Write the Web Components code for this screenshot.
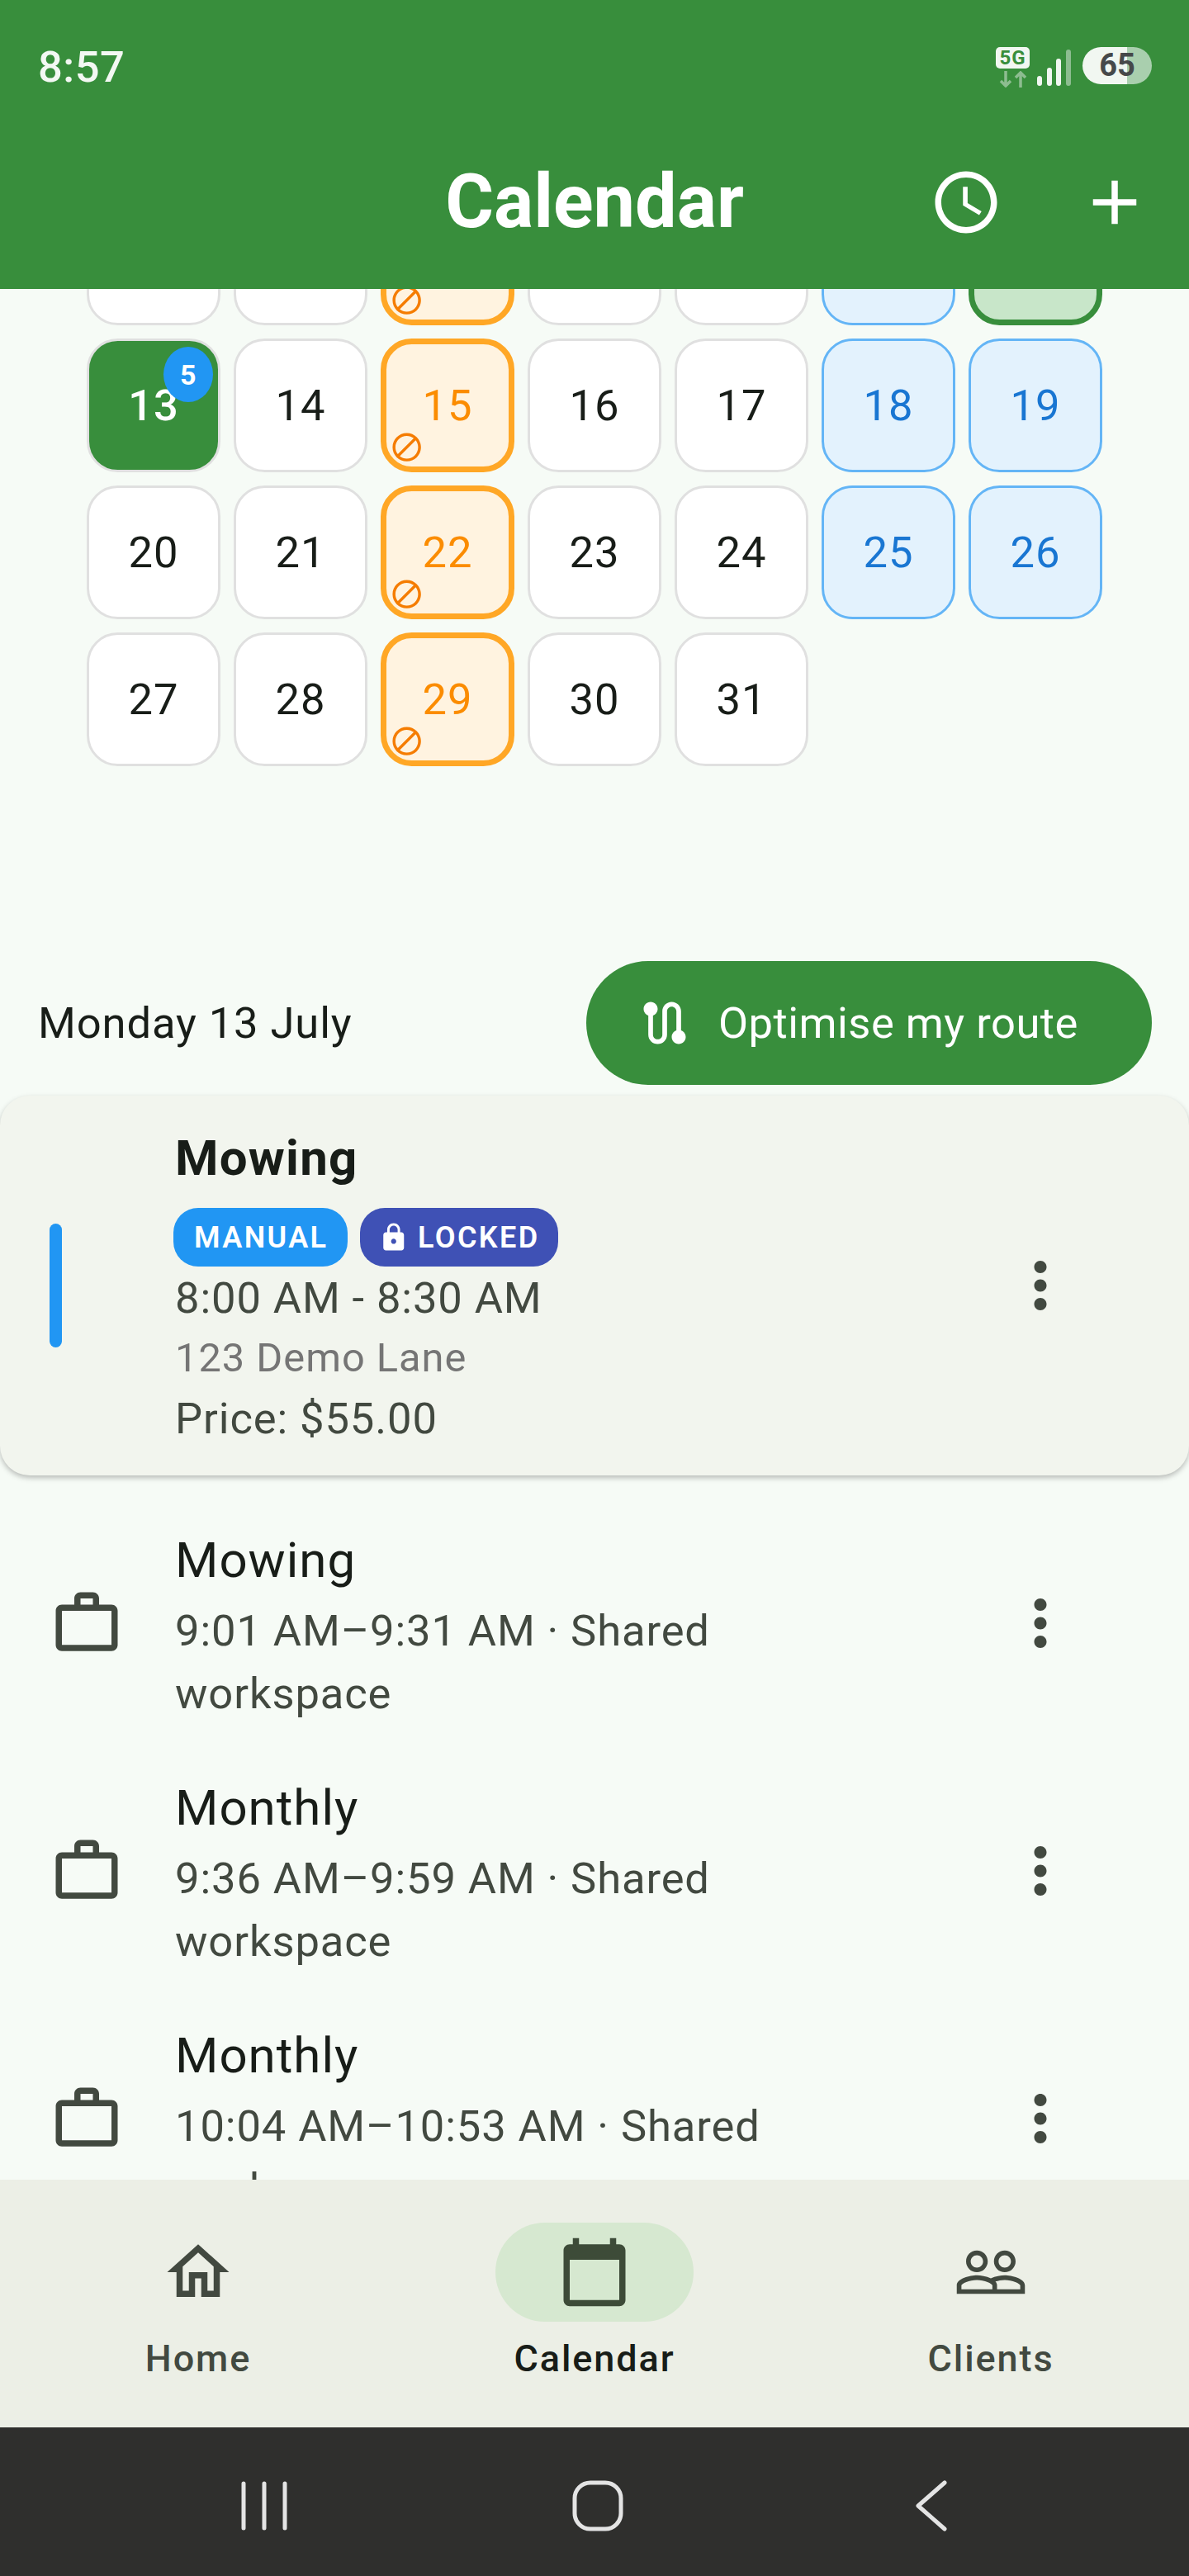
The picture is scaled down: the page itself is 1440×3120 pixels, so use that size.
<!DOCTYPE html>
<html>
<head>
<meta charset="utf-8">
<title>Calendar</title>
<style>
    html, body { margin: 0; padding: 0; background: #f6fbf6; }
    body { font-family: Roboto, "Noto Sans", sans-serif; color: #181d18; }
</style>
</head>
<body>
<app-shell></app-shell>

<script>
// material icon paths, all on a 24 unit box
const ICONS = {
    clock: "M11.99 2C6.47 2 2 6.48 2 12s4.47 10 9.99 10C17.52 22 22 17.52 22 12S17.52 2 11.99 2zM12 20c-4.42 0-8-3.58-8-8s3.58-8 8-8 8 3.58 8 8-3.58 8-8 8zm.5-13H11v6l5.25 3.15.75-1.23-4.5-2.67z",
    add: "M19 13h-6v6h-2v-6H5v-2h6V5h2v6h6v2z",
    block: "M12 2C6.48 2 2 6.48 2 12s4.48 10 10 10 10-4.48 10-10S17.52 2 12 2zM4 12c0-4.42 3.58-8 8-8 1.85 0 3.55.63 4.9 1.69L5.69 16.9C4.63 15.55 4 13.85 4 12zm8 8c-1.85 0-3.55-.63-4.9-1.69L18.31 7.1C19.37 8.45 20 10.15 20 12c0 4.42-3.58 8-8 8z",
    route: "M19 15.18V7c0-2.21-1.79-4-4-4s-4 1.79-4 4v10c0 1.1-.9 2-2 2s-2-.9-2-2V8.82C8.16 8.4 9 7.3 9 6c0-1.66-1.34-3-3-3S3 4.34 3 6c0 1.3.84 2.4 2 2.82V17c0 2.21 1.79 4 4 4s4-1.79 4-4V7c0-1.1.9-2 2-2s2 .9 2 2v8.18c-1.16.41-2 1.51-2 2.82 0 1.66 1.34 3 3 3s3-1.34 3-3c0-1.3-.84-2.4-2-2.82z",
    lock: "M18 8h-1V6c0-2.76-2.24-5-5-5S7 3.24 7 6v2H6c-1.1 0-2 .9-2 2v10c0 1.1.9 2 2 2h12c1.1 0 2-.9 2-2V10c0-1.1-.9-2-2-2zm-6 9c-1.1 0-2-.9-2-2s.9-2 2-2 2 .9 2 2-.9 2-2 2zm3.1-9H8.9V6c0-1.71 1.39-3.1 3.1-3.1 1.71 0 3.1 1.39 3.1 3.1v2z",
    more: "M12 8c1.1 0 2-.9 2-2s-.9-2-2-2-2 .9-2 2 .9 2 2 2zm0 2c-1.1 0-2 .9-2 2s.9 2 2 2 2-.9 2-2-.9-2-2-2zm0 6c-1.1 0-2 .9-2 2s.9 2 2 2 2-.9 2-2-.9-2-2-2z",
    work: "M14 6V4h-4v2h4zM4 8v11h16V8H4zm16-2c1.11 0 2 .89 2 2v11c0 1.11-.89 2-2 2H4c-1.11 0-2-.89-2-2l.01-11c0-1.11.88-2 1.99-2h4V4c0-1.11.89-2 2-2h4c1.11 0 2 .89 2 2v2h4z",
    home: "M12 5.69l5 4.5V18h-2v-6H9v6H7v-7.81l5-4.5M12 3L2 12h3v8h6v-6h2v6h6v-8h3L12 3z",
    calendar: "M20 3h-1V1h-2v2H7V1H5v2H4c-1.1 0-2 .9-2 2v16c0 1.1.9 2 2 2h16c1.1 0 2-.9 2-2V5c0-1.1-.9-2-2-2zm0 18H4V8h16v13z",
    people: "M16.5 13c-1.2 0-3.07.34-4.5 1-1.43-.67-3.3-1-4.5-1C5.33 13 1 14.08 1 16.25V19h22v-2.75c0-2.17-4.33-3.25-6.5-3.25zm-4 4.5h-10v-1.25c0-.54 2.56-1.75 5-1.75s5 1.21 5 1.75v1.25zm9 0H14v-1.25c0-.46-.2-.86-.52-1.22.88-.3 1.96-.53 3.02-.53 2.44 0 5 1.21 5 1.75v1.25zM7.5 12c1.93 0 3.5-1.57 3.5-3.5S9.43 5 7.5 5 4 6.57 4 8.5 5.57 12 7.5 12zm0-5.5c1.1 0 2 .9 2 2s-.9 2-2 2-2-.9-2-2 .9-2 2-2zm9 5.5c1.93 0 3.5-1.57 3.5-3.5S18.43 5 16.5 5 13 6.57 13 8.5s1.57 3.5 3.5 3.5zm0-5.5c1.1 0 2 .9 2 2s-.9 2-2 2-2-.9-2-2 .9-2 2-2z",
};

const icon = (name, size, color) =>
    `<svg width="${size}" height="${size}" viewBox="0 0 24 24" style="display:block;flex:none"><path fill="${color}" d="${ICONS[name]}"/></svg>`;

class StatusBar extends HTMLElement {
    constructor() {
        super();
        this.attachShadow({ mode: "open" });
        this.shadowRoot.innerHTML = `
            <style>
                :host { display: flex; justify-content: space-between; align-items: flex-start; height: 140px; box-sizing: border-box; padding: 57px 45px 0 46px; color: #f3f8f3; }
                .time { font-size: 52.5px; line-height: 48px; font-weight: 500; letter-spacing: .5px; }
                .right { display: flex; align-items: flex-start; }
                .net { width: 41px; margin-right: 9px; }
                .fiveg { height: 26px; border-radius: 5px; background: #f1f7f1; color: #388e3c; font-size: 24px; font-weight: 700; letter-spacing: 1px; line-height: 26px; text-align: center; }
                .net svg { display: block; margin-top: 3px; }
                .signal { display: block; margin-right: 14px; }
                .battery { width: 84px; height: 45px; border-radius: 23px; background: linear-gradient(90deg, #f1f7f1 0 54px, #a9cfae 54px); color: #46494a; font-size: 38px; font-weight: 700; line-height: 45px; text-align: center; }
            </style>
            <span class="time">8:57</span>
            <div class="right">
                <div class="net">
                    <div class="fiveg">5G</div>
                    <svg width="41" height="20" viewBox="0 0 41 20" fill="none" stroke="#8dbd90" stroke-width="3.5">
                        <path d="M12 0v18M6 12l6 6 6-6"/><path d="M30 20V2M24 8l6-6 6 6"/>
                    </svg>
                </div>
                <svg class="signal" width="41" height="47" viewBox="0 0 41 47">
                    <rect x="0" y="35" width="6" height="12" rx="3" fill="#f1f7f1"/>
                    <rect x="12" y="25" width="6" height="22" rx="3" fill="#f1f7f1"/>
                    <rect x="23" y="14" width="6" height="33" rx="3" fill="#f1f7f1"/>
                    <rect x="35" y="3" width="6" height="44" rx="3" fill="#8dbd90"/>
                </svg>
                <div class="battery">65</div>
            </div>
        `;
    }
}
customElements.define("status-bar", StatusBar);

class AppBar extends HTMLElement {
    constructor() {
        super();
        this.attachShadow({ mode: "open" });
        this.shadowRoot.innerHTML = `
            <style>
                :host { display: block; background: #388e3c; height: 350px; position: relative; z-index: 2; }
                .bar { display: grid; grid-template-columns: 1fr auto 1fr; align-items: center; height: 210px; padding: 0 45px; box-sizing: border-box; }
                h1 { grid-column: 2; margin: 0; font-size: 90px; line-height: 100px; font-weight: 700; color: #fff; }
                .actions { display: flex; justify-content: flex-end; gap: 90px; }
            </style>
            <status-bar></status-bar>
            <div class="bar">
                <h1><slot></slot></h1>
                <div class="actions">${icon("clock", 90, "#fff")}${icon("add", 90, "#fff")}</div>
            </div>
        `;
    }
}
customElements.define("app-bar", AppBar);

class CalDay extends HTMLElement {
    constructor() {
        super();
        this.attachShadow({ mode: "open" });
        const kind = this.getAttribute("kind") || "";
        const badge = this.getAttribute("badge");
        this.shadowRoot.innerHTML = `
            <style>
                :host { display: flex; align-items: center; justify-content: center; position: relative; width: 162px; height: 162px; box-sizing: border-box; border: 3.75px solid #e0e0e0; border-radius: 37.5px; background: #fff; color: #181d18; font-size: 52.5px; letter-spacing: 1px; }
                :host([kind="today"]) { background: #388e3c; color: #fff; font-weight: 500; }
                :host([kind="blocked"]) { background: #fff3e0; border: 7.5px solid #ffa726; color: #fb8c00; }
                :host([kind="weekend"]) { background: #e3f2fd; border-color: #64b5f6; color: #1976d2; }
                :host([kind="selected"]) { background: #c8e6c9; border: 7.5px solid #388e3c; }
                .block { position: absolute; left: 3.5px; bottom: 2.7px; }
                .badge { position: absolute; top: 7.25px; right: 6.25px; width: 60px; height: 67px; border-radius: 50%; background: #2196f3; color: #fff; font-size: 34px; font-weight: 700; letter-spacing: 0; display: flex; align-items: center; justify-content: center; }
            </style>
            <slot></slot>
            ${kind === "blocked" ? `<span class="block">${icon("block", 41.25, "#f57c00")}</span>` : ""}
            ${badge ? `<span class="badge">${badge}</span>` : ""}
        `;
    }
}
customElements.define("cal-day", CalDay);

class CalGrid extends HTMLElement {
    constructor() {
        super();
        this.attachShadow({ mode: "open" });
        this.shadowRoot.innerHTML = `
            <style>
                :host { display: grid; grid-template-columns: repeat(7, 162px); gap: 16px; padding-left: 105px; margin-top: -118px; margin-bottom: 236px; }
            </style>
            <slot></slot>
        `;
    }
}
customElements.define("cal-grid", CalGrid);

class DayHeader extends HTMLElement {
    constructor() {
        super();
        this.attachShadow({ mode: "open" });
        this.shadowRoot.innerHTML = `
            <style>
                :host { display: flex; align-items: center; justify-content: space-between; padding: 0 45px 0 46px; margin-bottom: 13px; }
                .date { font-size: 52.5px; letter-spacing: .9px; color: #181d18; }
                button { display: flex; align-items: center; box-sizing: border-box; width: 685px; height: 150px; border: 0; border-radius: 75px; padding: 0 0 0 61px; background: #388e3c; color: #fff; font: 400 52.5px Roboto, sans-serif; letter-spacing: .5px; }
                button svg { margin-right: 31px; }
            </style>
            <span class="date"><slot name="date"></slot></span>
            <button>${icon("route", 68, "#fff")}<slot name="action"></slot></button>
        `;
    }
}
customElements.define("day-header", DayHeader);

class JobChip extends HTMLElement {
    constructor() {
        super();
        this.attachShadow({ mode: "open" });
        this.shadowRoot.innerHTML = `
            <style>
                :host { display: inline-flex; align-items: center; height: 71px; box-sizing: border-box; padding: 0 24px 0 25px; border-radius: 30px; background: #2196f3; color: #fff; font-size: 36px; font-weight: 600; letter-spacing: 2.4px; }
                :host([locked]) { background: #3f51b5; padding: 0 22px; }
                svg { margin-right: 10px; }
            </style>
            ${this.hasAttribute("locked") ? icon("lock", 37.5, "#fff") : ""}
            <slot></slot>
        `;
    }
}
customElements.define("job-chip", JobChip);

class JobCard extends HTMLElement {
    constructor() {
        super();
        this.attachShadow({ mode: "open" });
        this.shadowRoot.innerHTML = `
            <style>
                :host { display: flex; align-items: center; height: 460px; box-sizing: border-box; padding-left: 60px; border-radius: 36px; background: #f2f5ee; box-shadow: 0 3px 6px rgba(0, 0, 0, .25); margin-bottom: 29px; }
                .bar { width: 15px; height: 150px; border-radius: 8px; background: #2196f3; margin-right: 137px; flex: none; }
                .body { flex: 1; }
                .title { font-size: 60px; line-height: 90px; font-weight: 700; letter-spacing: 1.2px; color: #181d18; }
                .chips { display: flex; gap: 15px; margin: 15px 0 0 -2px; }
                .time, .price { font-size: 52.5px; line-height: 76px; letter-spacing: .9px; color: #424940; }
                .addr { font-size: 48.75px; line-height: 70px; letter-spacing: 1px; color: #757575; }
                .more { margin-right: 135px; }
            </style>
            <div class="bar"></div>
            <div class="body">
                <div class="title"><slot name="title"></slot></div>
                <div class="chips"><slot name="chip"></slot></div>
                <div class="time"><slot name="time"></slot></div>
                <div class="addr"><slot name="addr"></slot></div>
                <div class="price"><slot name="price"></slot></div>
            </div>
            <div class="more">${icon("more", 90, "#424940")}</div>
        `;
    }
}
customElements.define("job-card", JobCard);

class JobRow extends HTMLElement {
    constructor() {
        super();
        this.attachShadow({ mode: "open" });
        this.shadowRoot.innerHTML = `
            <style>
                :host { display: flex; align-items: center; height: 300px; box-sizing: border-box; padding: 0 135px 0 60px; flex: none; }
                .lead { margin-right: 62px; }
                .body { flex: 1; }
                .title { font-size: 60px; line-height: 94px; letter-spacing: 1px; color: #181d18; }
                .sub { max-width: 800px; font-size: 52.5px; line-height: 76px; letter-spacing: .9px; color: #424940; }
            </style>
            <div class="lead">${icon("work", 90, "#424940")}</div>
            <div class="body">
                <div class="title"><slot name="title"></slot></div>
                <div class="sub"><slot name="sub"></slot></div>
            </div>
            ${icon("more", 90, "#424940")}
        `;
    }
}
customElements.define("job-row", JobRow);

class NavItem extends HTMLElement {
    constructor() {
        super();
        this.attachShadow({ mode: "open" });
        const active = this.hasAttribute("active");
        this.shadowRoot.innerHTML = `
            <style>
                :host { display: flex; flex-direction: column; align-items: center; flex: 1; padding-top: 52px; color: #424940; font-size: 45px; font-weight: 500; letter-spacing: 1.9px; }
                :host([active]) { color: #181d18; }
                .pill { width: 240px; height: 120px; border-radius: 60px; display: flex; align-items: center; justify-content: center; }
                :host([active]) .pill { background: #d6e8d0; }
                .label { line-height: 50px; margin-top: 20px; }
            </style>
            <div class="pill">${icon(this.getAttribute("icon"), 90, active ? "#3d4b38" : "#424940")}</div>
            <div class="label"><slot></slot></div>
        `;
    }
}
customElements.define("nav-item", NavItem);

class BottomNav extends HTMLElement {
    constructor() {
        super();
        this.attachShadow({ mode: "open" });
        this.shadowRoot.innerHTML = `
            <style>
                :host { display: flex; height: 300px; flex: none; background: #ecefe6; position: relative; }
            </style>
            <slot></slot>
        `;
    }
}
customElements.define("bottom-nav", BottomNav);

class SystemNav extends HTMLElement {
    constructor() {
        super();
        this.attachShadow({ mode: "open" });
        this.shadowRoot.innerHTML = `
            <style>
                :host { display: flex; align-items: center; justify-content: center; gap: 284px; height: 180px; box-sizing: border-box; padding: 9px 0 0 8px; flex: none; background: #2f2f2d; }
                svg { display: block; fill: none; stroke: #e4e4e4; stroke-width: 5; stroke-linecap: round; stroke-linejoin: round; }
            </style>
            <svg width="120" height="64" viewBox="0 0 120 64"><path d="M35 5v54M60 5v54M85 5v54"/></svg>
            <svg width="120" height="64" viewBox="0 0 120 64"><rect x="32" y="4" width="56" height="56" rx="19"/></svg>
            <svg width="120" height="64" viewBox="0 0 120 64"><path d="M76 4L44 32l32 28"/></svg>
        `;
    }
}
customElements.define("system-nav", SystemNav);

class AppShell extends HTMLElement {
    constructor() {
        super();
        this.attachShadow({ mode: "open" });
        // first week is scrolled under the app bar, only the bottom of its cells shows
        const weeks = [
            [[""], [""], ["", "blocked"], [""], [""], ["", "weekend"], ["", "selected"]],
            [[13, "today"], [14], [15, "blocked"], [16], [17], [18, "weekend"], [19, "weekend"]],
            [[20], [21], [22, "blocked"], [23], [24], [25, "weekend"], [26, "weekend"]],
            [[27], [28], [29, "blocked"], [30], [31]],
        ];
        const days = weeks.flat().map(([n, kind]) =>
            `<cal-day ${kind ? `kind="${kind}"` : ""} ${kind === "today" ? 'badge="5"' : ""}>${n}</cal-day>`).join("");
        const rows = [
            ["Mowing", "9:01 AM–9:31 AM · Shared workspace"],
            ["Monthly", "9:36 AM–9:59 AM · Shared workspace"],
            ["Monthly", "10:04 AM–10:53 AM · Shared workspace"],
        ].map(([t, s]) => `<job-row><span slot="title">${t}</span><span slot="sub">${s}</span></job-row>`).join("");
        this.shadowRoot.innerHTML = `
            <style>
                :host { display: flex; flex-direction: column; width: 1440px; height: 3120px; overflow: hidden; }
                main { flex: 1; min-height: 0; overflow: hidden; background: #f6fbf6; }
            </style>
            <app-bar>Calendar</app-bar>
            <main>
                <cal-grid>${days}</cal-grid>
                <day-header>
                    <span slot="date">Monday 13 July</span>
                    <span slot="action">Optimise my route</span>
                </day-header>
                <job-card>
                    <span slot="title">Mowing</span>
                    <job-chip slot="chip">MANUAL</job-chip>
                    <job-chip slot="chip" locked>LOCKED</job-chip>
                    <span slot="time">8:00 AM - 8:30 AM</span>
                    <span slot="addr">123 Demo Lane</span>
                    <span slot="price">Price: $55.00</span>
                </job-card>
                ${rows}
            </main>
            <bottom-nav>
                <nav-item icon="home">Home</nav-item>
                <nav-item icon="calendar" active>Calendar</nav-item>
                <nav-item icon="people">Clients</nav-item>
            </bottom-nav>
            <system-nav></system-nav>
        `;
    }
}
customElements.define("app-shell", AppShell);
</script>
</body>
</html>
